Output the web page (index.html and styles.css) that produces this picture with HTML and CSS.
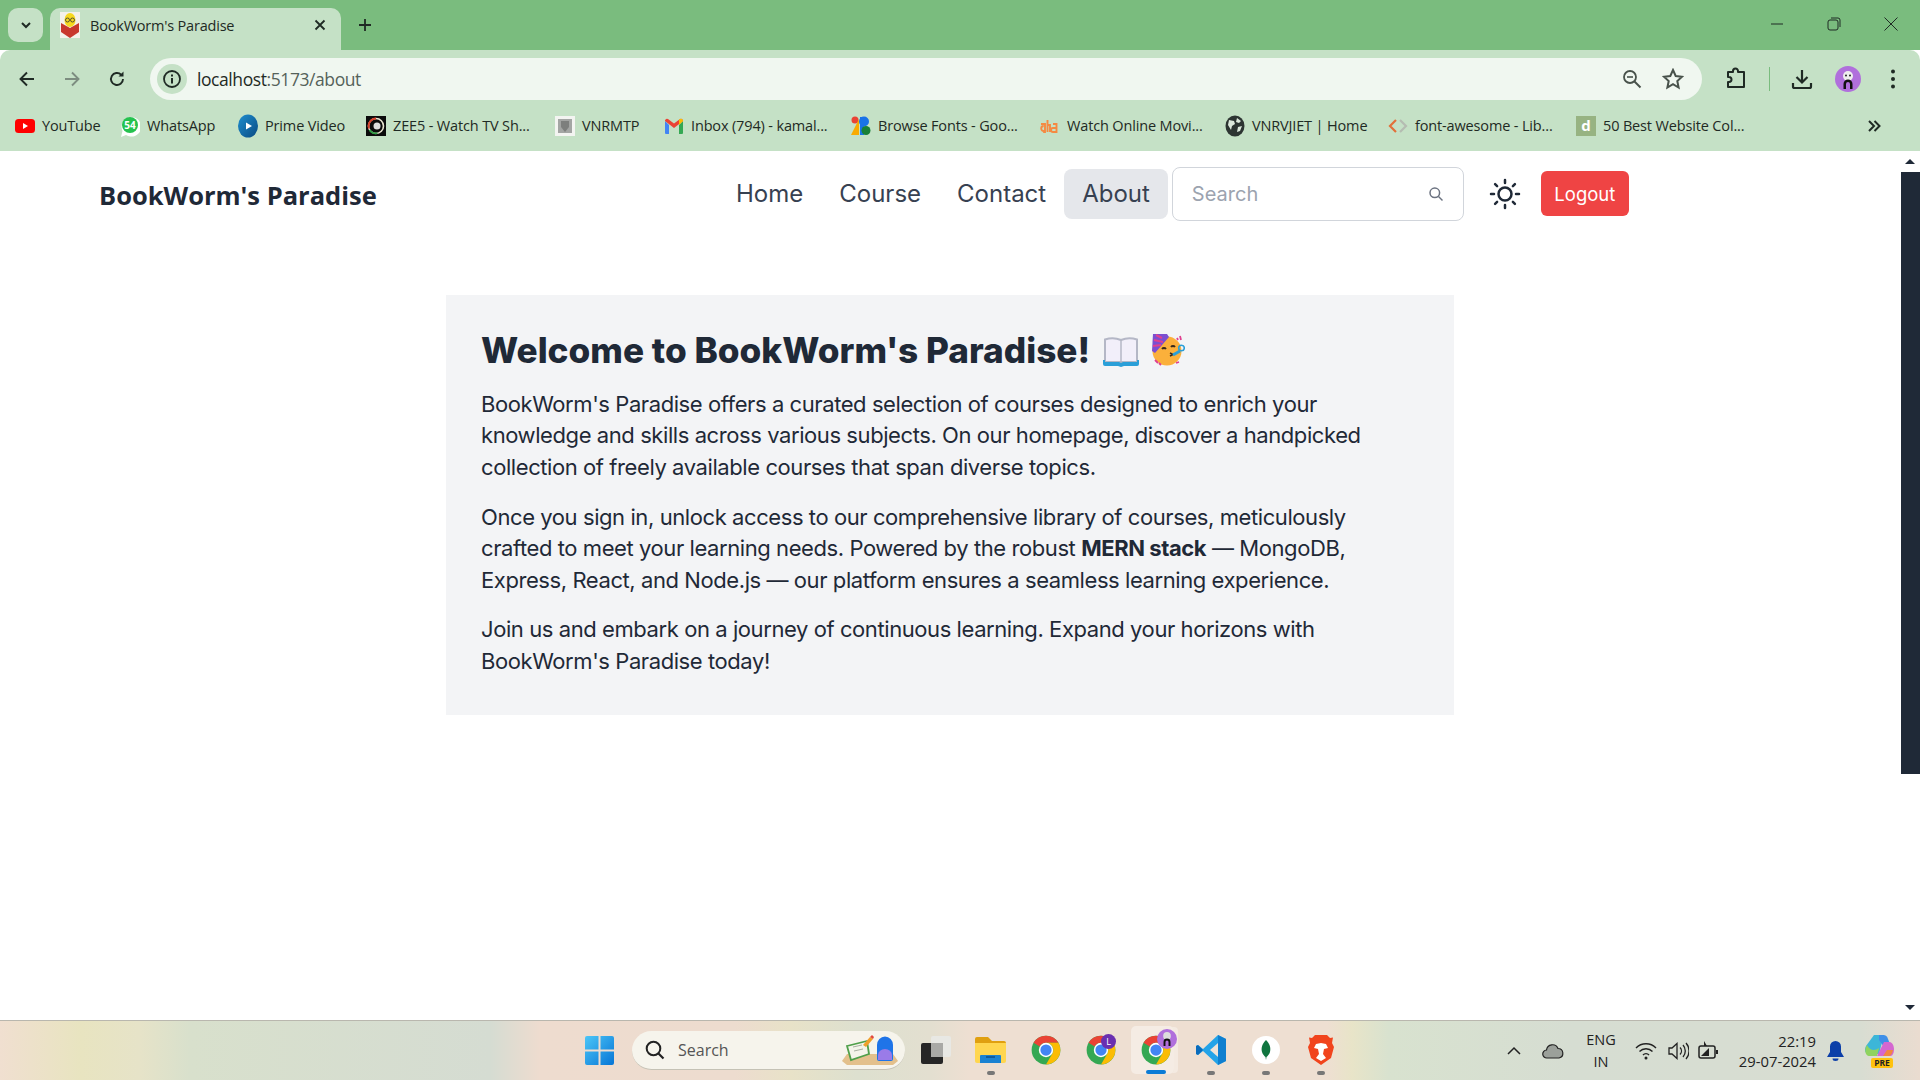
FILE: index.html
```html
<!DOCTYPE html>
<html lang="en">
<head>
<meta charset="utf-8">
<title>BookWorm's Paradise</title>
<link rel="stylesheet" href="styles.css">
</head>
<body>
<svg class="defs" width="0" height="0" aria-hidden="true">
  <symbol id="chrome" viewBox="0 0 48 48">
    <circle cx="24" cy="24" r="23" fill="#34a853"/>
    <path d="M24 1a23 23 0 0 1 19.9 11.5H24a11.5 11.5 0 0 0-10 5.8L4.1 12.5A23 23 0 0 1 24 1z" fill="#ea4335"/>
    <path d="M43.9 12.5A23 23 0 0 1 24 47l10-17.2A11.5 11.5 0 0 0 24 12.5z" fill="#fbbc04"/>
    <circle cx="24" cy="24" r="11.5" fill="#fff"/>
    <circle cx="24" cy="24" r="9" fill="#4285f4"/>
  </symbol>
</svg>

<div class="tabstrip">
  <div class="tab-switch">
    <svg width="14" height="14" viewBox="0 0 14 14"><path d="M3 5l4 4 4-4" fill="none" stroke="#1f2a24" stroke-width="2"/></svg>
  </div>
  <div class="tab">
    <svg class="favicon" width="20" height="26" viewBox="0 0 20 26">
      <rect width="20" height="26" fill="#f4f1ea"/>
      <ellipse cx="10" cy="8" rx="5.500" ry="7" fill="#f6d81f"/>
      <circle cx="7.500" cy="8" r="2" fill="none" stroke="#333" stroke-width=".8"/>
      <circle cx="12.500" cy="8" r="2" fill="none" stroke="#333" stroke-width=".8"/>
      <path d="M1 11l9 5 9-5v9l-9 6-9-6z" fill="#c8372d"/>
    </svg>
    <span class="tab-title">BookWorm's Paradise</span>
    <svg class="tab-close" width="12" height="12" viewBox="0 0 12 12"><path d="M1.500 1.500l9 9M10.500 1.500l-9 9" stroke="#1f2a24" stroke-width="1.800"/></svg>
  </div>
  <svg class="new-tab" width="14" height="14" viewBox="0 0 14 14"><path d="M7 1v12M1 7h12" stroke="#1f2a24" stroke-width="1.800"/></svg>
  <div class="window-controls">
    <svg width="14" height="14" viewBox="0 0 14 14"><path d="M1 7h12" stroke="#1f2a24" stroke-width="1"/></svg>
    <svg width="14" height="14" viewBox="0 0 14 14"><rect x="1" y="3" width="10" height="10" rx="2" fill="none" stroke="#1f2a24"/><path d="M4 1h7a2 2 0 0 1 2 2v7" fill="none" stroke="#1f2a24"/></svg>
    <svg width="14" height="14" viewBox="0 0 14 14"><path d="M.5.5l13 13M13.500.5l-13 13" stroke="#1f2a24" stroke-width="1"/></svg>
  </div>
</div>

<div class="toolbar">
  <div class="nav-buttons">
    <svg width="18" height="18" viewBox="0 0 18 18"><path d="M16 9H3M9 2.500L2.500 9 9 15.500" fill="none" stroke="#1f2a24" stroke-width="1.900"/></svg>
    <svg width="18" height="18" viewBox="0 0 18 18"><path d="M2 9h13M9 2.500L15.500 9 9 15.500" fill="none" stroke="#7d8d80" stroke-width="1.900"/></svg>
    <svg width="18" height="18" viewBox="0 0 18 18"><path d="M15 9a6 6 0 1 1-1.800-4.300" fill="none" stroke="#1f2a24" stroke-width="1.900"/><path d="M15.500 1.500v5h-5z" fill="#1f2a24"/></svg>
  </div>
  <div class="omnibox">
    <span class="site-info">
      <svg width="20" height="20" viewBox="0 0 20 20"><circle cx="10" cy="10" r="8" fill="none" stroke="#1f2a24" stroke-width="1.800"/><path d="M10 9v5.500M10 5.500v2" stroke="#1f2a24" stroke-width="2"/></svg>
    </span>
    <span class="url">localhost<span class="url-dim">:5173/about</span></span>
    <svg class="omni-zoom" width="20" height="20" viewBox="0 0 20 20"><circle cx="8" cy="8" r="6" fill="none" stroke="#48524b" stroke-width="1.800"/><path d="M5 8h6" stroke="#48524b" stroke-width="1.600"/><path d="M12.500 12.500L18.500 18.500" stroke="#48524b" stroke-width="1.900"/></svg>
    <svg class="omni-star" width="22" height="22" viewBox="0 0 22 22"><path d="M11 2l2.700 6 6.300.7-4.700 4.300 1.300 6.500L11 16.200 5.400 19.500 6.700 13 2 8.700 8.300 8z" fill="none" stroke="#48524b" stroke-width="2"/></svg>
  </div>
  <div class="toolbar-actions">
    <svg width="22" height="24" viewBox="0 0 22 24"><path d="M8 4V3a2.500 2.500 0 0 1 5 0v1h6v15H3v-5h1a2.500 2.500 0 0 0 0-5H3V4z" transform="translate(0 1)" fill="none" stroke="#1f2a24" stroke-width="2" stroke-linejoin="round"/></svg>
    <span class="divider"></span>
    <svg width="22" height="22" viewBox="0 0 22 22"><path d="M11 2v12M5.500 9l5.500 5.500L16.500 9" fill="none" stroke="#1f2a24" stroke-width="2.200"/><path d="M2 15v3.500a1.500 1.500 0 0 0 1.500 1.500h15a1.500 1.500 0 0 0 1.500-1.500V15" fill="none" stroke="#1f2a24" stroke-width="2.200"/></svg>
    <svg class="avatar" width="26" height="26" viewBox="0 0 26 26"><circle cx="13" cy="13" r="13" fill="#b06fdc"/><circle cx="13" cy="10" r="5" fill="#eee"/><path d="M8.500 23v-5a4.500 4.500 0 0 1 9 0v5h-2.500v-5a2 2 0 0 0-4 0v5z" fill="#111"/><circle cx="11" cy="9.500" r="1" fill="#222"/><circle cx="15" cy="9.500" r="1" fill="#222"/></svg>
    <svg width="6" height="22" viewBox="0 0 6 22"><circle cx="3" cy="3.500" r="2" fill="#1f2a24"/><circle cx="3" cy="11" r="2" fill="#1f2a24"/><circle cx="3" cy="18.500" r="2" fill="#1f2a24"/></svg>
  </div>
</div>

<div class="bookmarks">
  <div class="bm">
    <svg width="20" height="20" viewBox="0 0 20 20"><rect y="3" width="20" height="14" rx="3.500" fill="#f00"/><path d="M8 7l5 3-5 3z" fill="#fff"/></svg>
    <span>YouTube</span>
  </div>
  <div class="bm">
    <svg width="20" height="24" viewBox="0 0 20 24"><path d="M1 23l1.500-6A9.800 9.800 0 1 1 6 21z" fill="#fff"/><circle cx="10" cy="11" r="8" fill="#25c24f"/><text x="10" y="15" class="wa-count">54</text></svg>
    <span>WhatsApp</span>
  </div>
  <div class="bm">
    <svg width="20" height="24" viewBox="0 0 20 24"><defs><linearGradient id="pv" x1="0" y1="0" x2="1" y2="1"><stop offset="0" stop-color="#1f8fcf"/><stop offset="1" stop-color="#0a4a82"/></linearGradient></defs><ellipse cx="10" cy="12" rx="10" ry="11.500" fill="url(#pv)"/><path d="M8 8.500l6 3.500-6 3.500z" fill="#fff"/></svg>
    <span>Prime Video</span>
  </div>
  <div class="bm">
    <svg width="20" height="20" viewBox="0 0 20 20"><rect width="20" height="20" fill="#0b0b0b"/><circle cx="10" cy="10" r="7.500" fill="none" stroke="#e9e4d0" stroke-width="1.600"/><path d="M10 2.500a7.500 7.500 0 0 0-7 10" fill="none" stroke="#d6402b" stroke-width="1.800"/><path d="M3.500 14a7.500 7.500 0 0 0 8 3" fill="none" stroke="#2f9e44" stroke-width="1.800"/><circle cx="11" cy="10" r="3.500" fill="#ddd"/></svg>
    <span>ZEE5 - Watch TV Sh...</span>
  </div>
  <div class="bm">
    <svg width="20" height="20" viewBox="0 0 20 20"><rect width="20" height="20" fill="#f3f4f1"/><rect x="3" y="3" width="14" height="14" fill="#a3a5a3"/><path d="M6 5h8v6l-4 5-4-5z" fill="#7d7f7d"/></svg>
    <span>VNRMTP</span>
  </div>
  <div class="bm">
    <svg width="20" height="18" viewBox="0 0 20 18"><path d="M1 4v12a1 1 0 0 0 1 1h3V8z" fill="#4285f4"/><path d="M19 4v12a1 1 0 0 1-1 1h-3V8z" fill="#34a853"/><path d="M1 4l9 7 9-7v-.5a2 2 0 0 0-3-1.500L10 6.500 4 2a2 2 0 0 0-3 1.500z" fill="#ea4335"/><path d="M15 8l4-4v-.5a2 2 0 0 0-3-1.500l-1 .8z" fill="#fbbc04"/></svg>
    <span>Inbox (794) - kamal...</span>
  </div>
  <div class="bm">
    <svg width="20" height="20" viewBox="0 0 20 20"><circle cx="4" cy="4" r="3.500" fill="#ea4335"/><path d="M0 19L8 3v16z" fill="#f9ab00"/><rect x="9" y="1" width="4" height="18" fill="#1a73e8"/><circle cx="13" cy="5.500" r="5" fill="#1a73e8"/><circle cx="15" cy="14.500" r="4.500" fill="#188038"/></svg>
    <span>Browse Fonts - Goo...</span>
  </div>
  <div class="bm">
    <svg width="20" height="20" viewBox="0 0 20 20"><path d="M1 8h4v8H4l-.3-1a2.500 2.500 0 1 1 0-5M7.500 4v12M7.500 9h2.500v7M13 8h3.500v8H13a2 2 0 0 1 0-4h3.500" fill="none" stroke="#f58a42" stroke-width="1.900"/></svg>
    <span>Watch Online Movi...</span>
  </div>
  <div class="bm">
    <svg width="20" height="22" viewBox="0 0 20 22"><ellipse cx="10" cy="11" rx="9.500" ry="10.500" fill="#2d3532"/><path d="M4 5l5 1 1 3-3 2-1 4-3-5zM12 3l4 3-2 2-3-1zM13 12l4-1-2 5-3 1z" fill="#dce8dc"/></svg>
    <span>VNRVJIET | Home</span>
  </div>
  <div class="bm">
    <svg width="20" height="20" viewBox="0 0 20 20"><path d="M8 4l-6 6 6 6" fill="none" stroke="#e2703a" stroke-width="2.200"/><path d="M12 4l6 6-6 6" fill="none" stroke="#b5bcb2" stroke-width="2.200"/></svg>
    <span>font-awesome - Lib...</span>
  </div>
  <div class="bm">
    <span class="d-icon">d</span>
    <span>50 Best Website Col...</span>
  </div>
  <svg class="bm-more" width="14" height="14" viewBox="0 0 14 14"><path d="M2 2l5 5-5 5M7.500 2l5 5-5 5" fill="none" stroke="#1f2a24" stroke-width="2"/></svg>
</div>

<div class="viewport">
  <main class="page">
    <nav class="navbar">
      <a class="brand">BookWorm's Paradise</a>
      <ul class="menu">
        <li class="menu-item">Home</li>
        <li class="menu-item">Course</li>
        <li class="menu-item">Contact</li>
        <li class="menu-item is-active">About</li>
      </ul>
      <label class="search">
        <span class="search-placeholder">Search</span>
        <svg width="16" height="16" viewBox="0 0 16 16"><circle cx="6.800" cy="6.800" r="4.800" fill="none" stroke="#6b7280" stroke-width="1.500"/><path d="M10.500 10.500L14.500 14.500" stroke="#6b7280" stroke-width="1.500"/></svg>
      </label>
      <svg class="sun" width="32" height="32" viewBox="0 0 32 32" fill="none" stroke="#1f2937"><circle cx="16" cy="16" r="6.500" stroke-width="2.500"/><path d="M16 2v3M16 27v3M2 16h3M27 16h3M6.100 6.100l2 2M23.900 23.900l2 2M6.100 25.900l2-2M23.900 8.100l2-2" stroke-width="2.500" stroke-linecap="round"/></svg>
      <button class="logout">Logout</button>
    </nav>

    <section class="card">
      <h1 class="card-title">Welcome to BookWorm's Paradise!
        <svg class="emoji" width="36" height="30" viewBox="0 0 36 30">
          <path d="M2 2.500c5-1.500 11-1.500 16 .5 5-2 11-2 16-.5V25H2z" fill="#f2effa" stroke="#b4b7c6" stroke-width="2"/>
          <path d="M18 3v22" stroke="#b4b7c6" stroke-width="1.500"/>
          <path d="M0 23h2v2h14l2 1 2-1h14v-2h2v4a2 2 0 0 1-2 2H21l-3 1-3-1H2a2 2 0 0 1-2-2z" fill="#2a9fd8"/>
        </svg>
        <svg class="emoji emoji-party" width="34" height="32" viewBox="0 0 34 32">
          <circle cx="16" cy="17" r="14.500" fill="#fbb03b"/>
          <path d="M2 0h14l2 3L4 19 1 17z" fill="#7b4fd0"/>
          <path d="M5 1l6 3M3 6l9 2M2 12l8-1" stroke="#e0408f" stroke-width="2"/>
          <path d="M11 15a2.500 2.500 0 0 1 4 0M20 13a2.500 2.500 0 0 1 4 0" fill="none" stroke="#3a2a1a" stroke-width="1.800"/>
          <path d="M19 22l3-1.500-3-1.500" fill="none" stroke="#3a2a1a" stroke-width="1.500"/>
          <path d="M22 21l7-4" stroke="#2a9fd8" stroke-width="3"/>
          <circle cx="30.500" cy="14" r="2.800" fill="none" stroke="#2a9fd8" stroke-width="1.600"/>
          <path d="M29 2l1 4M26 4l1 2M4 26l3 3M8 29l2 2M25 29l3-1" stroke="#e0408f" stroke-width="1.800"/>
        </svg>
      </h1>
      <p class="card-text">BookWorm's Paradise offers a curated selection of courses designed to enrich your knowledge and skills across various subjects. On our homepage, discover a handpicked collection of freely available courses that span diverse topics.</p>
      <p class="card-text">Once you sign in, unlock access to our comprehensive library of courses, meticulously crafted to meet your learning needs. Powered by the robust <strong>MERN stack</strong> — MongoDB, Express, React, and Node.js — our platform ensures a seamless learning experience.</p>
      <p class="card-text">Join us and embark on a journey of continuous learning. Expand your horizons with BookWorm's Paradise today!</p>
    </section>
  </main>
  <div class="scrollbar">
    <span class="arrow-up"></span>
    <span class="thumb"></span>
    <span class="arrow-down"></span>
  </div>
</div>

<footer class="taskbar">
  <svg class="start" width="29" height="29" viewBox="0 0 29 29">
    <defs><linearGradient id="win" x1="0" y1="0" x2="1" y2="1"><stop offset="0" stop-color="#4cc6f7"/><stop offset="1" stop-color="#0675d6"/></linearGradient></defs>
    <path d="M0 2a2 2 0 0 1 2-2h11.500v13.500H0zM15.500 0H27a2 2 0 0 1 2 2v11.500H15.500zM0 15.500h13.500V29H2a2 2 0 0 1-2-2zM15.500 15.500H29V27a2 2 0 0 1-2 2H15.500z" fill="url(#win)"/>
  </svg>
  <div class="task-search">
    <svg width="20" height="20" viewBox="0 0 20 20"><circle cx="8.500" cy="8.500" r="6.800" fill="none" stroke="#222" stroke-width="2"/><path d="M13.500 13.500L18.500 18.500" stroke="#222" stroke-width="2.200"/></svg>
    <span>Search</span>
    <svg class="search-art" width="56" height="31" viewBox="0 0 56 31">
      <path d="M0 26l5-7h46l5 7-5 4H5z" fill="#e3c08c"/>
      <path d="M5 11l20-5 2 13-18 6z" fill="#f4f4ea" stroke="#4f9f4a" stroke-width="1.800"/>
      <path d="M11 12l9-2M12 16l9-2" stroke="#a8b0a0" stroke-width="1"/>
      <path d="M21 10l7-8 3 2-7 8z" fill="#f0a02c"/>
      <path d="M28 2l3 2 1-2-2-2z" fill="#e2483d"/>
      <path d="M35 24V10a7.500 8 0 0 1 16 0v14a2 2 0 0 1-2 2H37a2 2 0 0 1-2-2z" fill="#1f74e8"/>
      <path d="M36 20a7 6 0 0 1 14 0v5H36z" fill="#9a7be8"/>
    </svg>
  </div>
  <div class="task-icons">
    <div class="task-cell">
      <svg width="30" height="28" viewBox="0 0 30 28"><rect x="10" width="20" height="21" rx="2" fill="#e8e8e4"/><rect y="7" width="22" height="21" rx="2" fill="#262626"/><path d="M10 7h12v14H10z" fill="#a9a9a6"/></svg>
    </div>
    <div class="task-cell">
      <svg width="31" height="27" viewBox="0 0 31 27"><path d="M0 3a2 2 0 0 1 2-2h11l4 4h12a2 2 0 0 1 2 2v4H0z" fill="#e0a010"/><path d="M0 7h31v18a2 2 0 0 1-2 2H2a2 2 0 0 1-2-2z" fill="#ffd64f"/><path d="M5 20a1 1 0 0 1 1-1h19a1 1 0 0 1 1 1v7H5z" fill="#1a82d2"/><path d="M11 21h9" stroke="#0d4f8f" stroke-width="1.500"/></svg>
      <span class="pin"></span>
    </div>
    <div class="task-cell">
      <svg width="30" height="30"><use href="#chrome"/></svg>
    </div>
    <div class="task-cell">
      <svg width="30" height="30"><use href="#chrome"/></svg>
      <span class="badge-l">L</span>
    </div>
    <div class="task-cell is-current">
      <svg class="current-icon" width="30" height="30"><use href="#chrome"/></svg>
      <svg class="badge-avatar" width="20" height="20" viewBox="0 0 26 26"><circle cx="13" cy="13" r="13" fill="#b06fdc"/><circle cx="13" cy="9" r="5" fill="#ddd"/><path d="M8.500 22v-5a4.500 4.500 0 0 1 9 0v5h-2.500v-5a2 2 0 0 0-4 0v5z" fill="#111"/></svg>
      <span class="pin pin-active"></span>
    </div>
    <div class="task-cell">
      <svg width="30" height="30" viewBox="0 0 30 30"><path d="M22 0l8 4v22l-8 4L7 16 2 20l-2-1V11l2-1 5 4z" fill="#23a3e8"/><path d="M22 0v30l8-4V4z" fill="#0f7fd0"/><path d="M22 8l-8 7 8 7z" fill="#eee3d8"/><path d="M0 11l2-1 5 5-5 5-2-1z" fill="#0a6cbc"/></svg>
      <span class="pin"></span>
    </div>
    <div class="task-cell">
      <svg width="28" height="28" viewBox="0 0 28 28"><circle cx="14" cy="14" r="14" fill="#fff"/><path d="M14 4c4 4 5 8 4 12-.7 2.500-2.500 4-3.500 5l-.5 3-.5-3c-1-1-2.800-2.500-3.500-5-1-4 0-8 4-12z" fill="#10753f"/></svg>
      <span class="pin"></span>
    </div>
    <div class="task-cell">
      <svg width="26" height="30" viewBox="0 0 26 30"><path d="M7 0h12l3 3 3-.5L24 8l2 4-3 11-10 7-10-7L0 12l2-4L1 2.500 4 3z" fill="#f1441d"/><path d="M8 9l5-1 5 1 2 4-4 1-1 5 3 4-5 3-5-3 3-4-1-5-4-1z" fill="#fff"/></svg>
      <span class="pin"></span>
    </div>
  </div>
  <div class="tray">
    <svg class="tray-item" width="14" height="10" viewBox="0 0 14 10"><path d="M1 8l6-6 6 6" fill="none" stroke="#222" stroke-width="1.500"/></svg>
    <svg class="tray-item" width="22" height="16" viewBox="0 0 22 16"><path d="M5 15a4 4 0 0 1-.5-8A6 6 0 0 1 16 5.500 4.800 4.800 0 0 1 17 15z" fill="#9ba09a" stroke="#222" stroke-width="1.200"/></svg>
    <div class="tray-item lang">ENG<br>IN</div>
    <svg class="tray-item" width="22" height="18" viewBox="0 0 22 18" fill="none" stroke="#222" stroke-width="1.400"><path d="M1 6a14 14 0 0 1 20 0M4.500 9.500a9 9 0 0 1 13 0M8 13a4 4 0 0 1 6 0"/><circle cx="11" cy="16" r=".8" fill="#222"/></svg>
    <svg class="tray-item" width="21" height="18" viewBox="0 0 21 18" fill="none" stroke="#222" stroke-width="1.300"><path d="M1 6h3l5-4.500v15L4 12H1z"/><path d="M12 5.500a5 5 0 0 1 0 7M15 3a9 9 0 0 1 0 12M18 1a12 12 0 0 1 0 16"/></svg>
    <svg class="tray-item" width="20" height="20" viewBox="0 0 20 20"><rect x="1" y="5" width="16" height="12" rx="2" fill="none" stroke="#222" stroke-width="1.500"/><path d="M18 9h2v4h-2z" fill="#222"/><path d="M3 15l8-8v8z" fill="#222"/><path d="M6 0v5h3z" fill="#222"/></svg>
    <div class="clock"><span>22:19</span><span>29-07-2024</span></div>
    <svg class="tray-item" width="17" height="20" viewBox="0 0 17 20"><path d="M8.500 0a5.500 5.500 0 0 1 5.500 5.500V11l3 5H0l3-5V5.500A5.500 5.500 0 0 1 8.500 0z" fill="#0c3fa8"/><path d="M5.500 17.500h6a3 2.500 0 0 1-6 0z" fill="#0c3fa8"/></svg>
    <div class="tray-item copilot">
      <svg width="30" height="26" viewBox="0 0 30 26"><path d="M9 1h10l-5 19H4c-4 0-5-4-3-8z" fill="#3cb6d8"/><path d="M2 11c3 6 8 6 12 3l-2 8H5c-5 0-6-6-3-11z" fill="#8fd35f"/><path d="M14 1h4c3 0 4 1 5 4l2 5-6 3-5-7z" fill="#3f8fe8"/><path d="M19 8h6c4 1 5 8 3 12-1 2-2 2-4 2H12z" fill="#d467d0"/><path d="M22 16h6c-1 4-2 6-5 6h-5z" fill="#f2873f"/></svg>
      <span class="pre">PRE</span>
    </div>
  </div>
</footer>
</body>
</html>
```
FILE: styles.css
```css
* { box-sizing: border-box; }
html, body { margin: 0; padding: 0; height: 100%; }
body {
  width: 1920px;
  height: 1080px;
  overflow: hidden;
  display: flex;
  flex-direction: column;
  background: #fff;
  font-family: "Inter", "Liberation Sans", sans-serif;
  color: #1f2937;
}
.defs { position: absolute; }

/* browser chrome */
.tabstrip {
  height: 50px;
  flex: none;
  display: flex;
  align-items: flex-end;
  background: #7abc7e;
  padding-left: 8px;
  font-family: "Open Sans", "Liberation Sans", sans-serif;
  color: #1f2a24;
}
.tab-switch {
  width: 35px;
  height: 34px;
  margin-bottom: 8px;
  border-radius: 10px;
  background: #c5e1c6;
  display: flex;
  align-items: center;
  justify-content: center;
}
.tab {
  width: 291px;
  height: 42px;
  margin-left: 7px;
  background: #c5e1c6;
  border-radius: 10px 10px 0 0;
  display: flex;
  align-items: center;
  padding: 0 15px 8px 10px;
}
.favicon { flex: none; }
.tab-title {
  margin-left: 10px;
  font-size: 14.500px;
  letter-spacing: -0.2px;
  white-space: nowrap;
}
.tab-close { margin-left: auto; }
.new-tab { margin: 0 0 18px 17px; }
.window-controls {
  margin-left: auto;
  display: flex;
  gap: 43px;
  margin-bottom: 19px;
  padding-right: 22px;
}
.toolbar {
  height: 58px;
  flex: none;
  display: flex;
  align-items: flex-start;
  background: #c5e1c6;
  border-radius: 10px 10px 0 0;
  padding-top: 8px;
  font-family: "Open Sans", "Liberation Sans", sans-serif;
}
.nav-buttons {
  width: 150px;
  height: 42px;
  padding-left: 18px;
  display: flex;
  gap: 27px;
  align-items: center;
}
.omnibox {
  width: 1552px;
  height: 42px;
  background: #f0f7f0;
  border-radius: 21px;
  display: flex;
  align-items: center;
  padding: 0 18px 0 7px;
}
.site-info {
  width: 30px;
  height: 30px;
  border-radius: 50%;
  background: #c5e1c6;
  display: flex;
  align-items: center;
  justify-content: center;
}
.url { margin-left: 10px; font-size: 17.500px; letter-spacing: -0.42px; color: #1f2a24; }
.url-dim { color: #55625a; }
.omni-zoom { margin-left: auto; }
.omni-star { margin-left: 20px; }
.toolbar-actions {
  flex: 1;
  height: 42px;
  display: flex;
  align-items: center;
  padding-left: 23px;
}
.divider { width: 1px; height: 24px; background: #7abc7e; margin: 0 21px 0 22px; }
.avatar { margin-left: 22px; }
.toolbar-actions svg:last-child { margin-left: 29px; }

.bookmarks {
  height: 43px;
  flex: none;
  display: grid;
  grid-template-columns: 105px 118px 128px 189px 109px 187px 189px 185px 163px 188px 291px 1fr;
  align-items: center;
  padding: 0 0 8px 15px;
  background: #c5e1c6;
  font-family: "Open Sans", "Liberation Sans", sans-serif;
  font-size: 14.500px;
  letter-spacing: -0.15px;
  color: #1f2a24;
}
.bm { display: flex; align-items: center; gap: 7px; white-space: nowrap; }
.bm svg { flex: none; }
.wa-count { font: 700 10px "Open Sans", sans-serif; fill: #fff; text-anchor: middle; letter-spacing: 0; }
.d-icon {
  width: 20px;
  height: 20px;
  background: #97b382;
  color: #fff;
  font-weight: 700;
  font-size: 15px;
  line-height: 19px;
  text-align: center;
}
.bm-more { justify-self: start; }

/* page */
.viewport {
  height: 869px;
  flex: none;
  display: flex;
}
.page { width: 1900px; flex: none; }
.scrollbar {
  width: 20px;
  flex: none;
  display: flex;
  flex-direction: column;
  align-items: center;
  padding-top: 8px;
}
.arrow-up, .arrow-down {
  width: 0;
  height: 0;
  border-left: 5px solid transparent;
  border-right: 5px solid transparent;
}
.arrow-up { border-bottom: 5px solid #1f2937; margin-bottom: 8px; }
.arrow-down { border-top: 5px solid #1f2937; margin-top: auto; margin-bottom: 10px; }
.thumb { width: 19px; height: 602px; margin-left: 1px; background: #1f2937; }

.navbar {
  height: 144px;
  display: flex;
  align-items: flex-start;
  padding: 16px 0 0 99px;
}
.brand {
  width: 619px;
  margin-top: 9px;
  font-family: "Open Sans", "Liberation Sans", sans-serif;
  font-size: 25.500px;
  line-height: 38px;
  font-weight: 700;
  color: #1f2937;
  white-space: nowrap;
}
.menu {
  list-style: none;
  margin: 2px 0 0;
  padding: 0;
  display: flex;
  gap: 0;
}
.menu-item {
  height: 50px;
  padding: 0 18px;
  font-size: 24px;
  line-height: 50px;
  color: #374151;
  border-radius: 8px;
}
.menu-item.is-active { background: #e5e7eb; }
.search {
  width: 292px;
  height: 54px;
  margin-left: 4px;
  border: 1px solid #d1d5db;
  border-radius: 8px;
  display: flex;
  align-items: center;
  justify-content: space-between;
  padding: 0 19px;
}
.search-placeholder { font-size: 20px; color: #9ca3af; }
.sun { margin: 11px 0 0 25px; }
.logout {
  width: 88px;
  height: 45px;
  margin: 4px 0 0 20px;
  border: 0;
  border-radius: 6px;
  background: #ef4444;
  color: #fff;
  font-family: "Inter", sans-serif;
  font-size: 18.500px;
}

.card {
  width: 1008px;
  margin: 0 auto;
  padding: 33px 36px 38px 35px;
  background: #f3f4f6;
}
.card-title {
  margin: 0 0 17px;
  font-size: 35.200px;
  line-height: 44px;
  font-weight: 800;
  color: #1f2937;
  white-space: nowrap;
}
.emoji { vertical-align: -4px; margin-left: 5px; }
.emoji-party { vertical-align: -3px; }
.card-text {
  margin: 0 0 18.500px;
  font-size: 22px;
  letter-spacing: -0.42px;
  line-height: 31.400px;
  color: #1f2937;
}
.card-text:last-child { margin-bottom: 0; }
.card-text strong { font-weight: 700; }

/* taskbar */
.taskbar {
  flex: 1;
  display: flex;
  align-items: center;
  padding-left: 585px;
  border-top: 1px solid #b9b7ae;
  background: linear-gradient(90deg,
    #f0dfd0 0, #e8e4c0 80px, #e6e3c8 140px, #d8e0cc 190px, #d5dcd2 490px,
    #eedccf 540px, #eddccf 735px, #e8e2c8 790px, #dde0cf 857px, #e3dfd0 930px,
    #eedfd2 970px, #eedfd2 1327px, #e8e4c8 1352px, #d8e2cf 1389px, #d6ddd2 1572px,
    #d8ddd2 1860px, #eadcd0 1920px);
  font-family: "Open Sans", "Liberation Sans", sans-serif;
  color: #222;
}
.start { flex: none; }
.task-search {
  width: 273px;
  height: 39px;
  margin-left: 18px;
  border-radius: 20px;
  background: #f6f4ec;
  border-bottom: 1px solid #c5c2b5;
  display: flex;
  align-items: center;
  padding-left: 13px;
  font-size: 16px;
  color: #555;
}
.task-search span { margin-left: 13px; }
.search-art { margin-left: auto; margin-right: 7px; }
.task-icons { display: flex; margin-left: 3px; height: 59px; }
.task-cell {
  width: 55px;
  height: 59px;
  display: flex;
  align-items: center;
  justify-content: center;
  position: relative;
  padding-bottom: 2px;
}
.pin {
  position: absolute;
  bottom: 5px;
  left: 50%;
  width: 8px;
  height: 4px;
  margin-left: -4px;
  border-radius: 2px;
  background: #777;
}
.is-current::before {
  content: "";
  position: absolute;
  left: 3px;
  top: 5px;
  width: 43px;
  height: 48px;
  border-radius: 5px;
  background: rgba(255, 255, 255, .4);
  box-shadow: 5px 0 0 -1px rgba(255, 255, 255, .35);
}
.current-icon { position: relative; }
.badge-avatar { position: absolute; top: 8px; right: 6px; }
.pin-active { width: 20px; margin-left: -10px; background: #0a7bd6; bottom: 6px; }
.badge-l {
  position: absolute;
  width: 15px;
  height: 15px;
  border-radius: 50%;
  background: #6a2fb0;
  color: #fff;
  font-size: 9px;
  line-height: 15px;
  text-align: center;
  top: 13px;
  right: 12px;
}
.tray {
  margin-left: auto;
  height: 59px;
  display: grid;
  grid-template-columns: 38px 40px 56px 34px 30px 30px 93px 38px 52px;
  align-items: center;
  justify-items: center;
  padding-right: 14px;
}
.lang { font-size: 14.500px; line-height: 22px; text-align: center; }
.clock {
  justify-self: end;
  display: flex;
  flex-direction: column;
  align-items: flex-end;
  font-size: 14.800px;
  line-height: 20px;
  white-space: nowrap;
}
.copilot { position: relative; width: 30px; height: 34px; }
.pre {
  position: absolute;
  left: 6px;
  bottom: 0;
  width: 22px;
  height: 10px;
  background: #ffc20e;
  border-radius: 2px;
  color: #222;
  font-size: 8.500px;
  line-height: 10px;
  font-weight: 700;
  text-align: center;
}
```
